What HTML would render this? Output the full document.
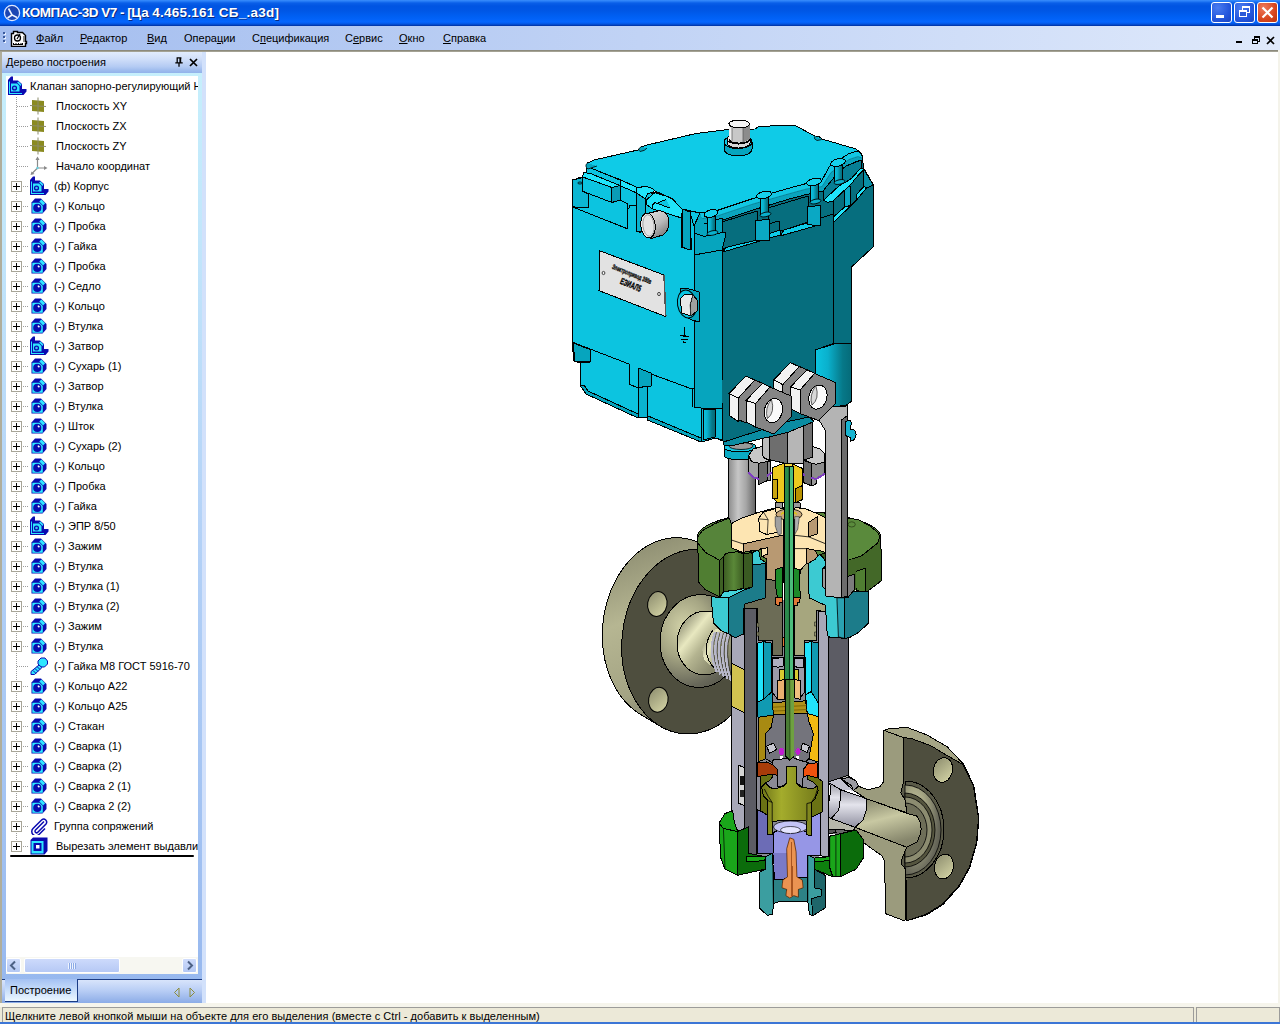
<!DOCTYPE html>
<html><head><meta charset="utf-8"><title>KOMPAS-3D V7</title>
<style>
*{box-sizing:border-box;margin:0;padding:0}
html,body{width:1280px;height:1024px;overflow:hidden;background:#fff;font-family:"Liberation Sans",sans-serif;font-size:11px;color:#000}
#title{position:absolute;left:0;top:0;width:1280px;height:26px;background:linear-gradient(180deg,#3a8efc 0,#2278f4 1.5px,#0a5fe8 3px,#0054e2 6px,#0057e6 11px,#0060f4 17px,#0566fe 22px,#0455e0 24px,#002f9e 26px)}
#title .cap{position:absolute;left:22px;top:5px;color:#fff;font-weight:bold;font-size:13.5px;letter-spacing:-0.05px;white-space:nowrap;text-shadow:1px 1px 0 #0a2a80}
.tb{position:absolute;top:2px;width:21px;height:21px;border:1px solid #fff;border-radius:3px;background:radial-gradient(circle at 30% 25%,#4a7cf0,#2456dc 60%,#1a44c0)}
.tb.x{background:radial-gradient(circle at 30% 25%,#ee7a5c,#d8461e 60%,#b83410)}
#menu{position:absolute;left:0;top:26px;width:1280px;height:24px;background:linear-gradient(90deg,#a3bdef,#dfe9fb)}
#menu span{position:absolute;top:6px;font-size:11px;white-space:nowrap}
#menu u{text-decoration:underline}
#mline{position:absolute;left:0;top:50px;width:1278px;height:2px;background:linear-gradient(180deg,#807e70,#b0aea0)}
#pgray{position:absolute;left:0;top:52px;width:2px;height:951px;background:#b0ae9c}
#pbg{position:absolute;left:2px;top:52px;width:200px;height:951px;background:linear-gradient(180deg,#c6f0fc 0,#c2e6fb 20%,#b4d2f7 50%,#a0c0f1 85%,#96b7ee 100%)}
#pright{position:absolute;left:202px;top:52px;width:4px;height:951px;background:#d2e1fb}
#phead{position:absolute;left:2px;top:52px;width:200px;height:21px;background:linear-gradient(180deg,#e2ecfd 0,#cfdef9 35%,#b4cbf3 70%,#9dbbed 88%,#92b2ea 100%)}
#phead span{position:absolute;left:4px;top:4px;font-size:11px;white-space:nowrap}
#tree{position:absolute;left:6px;top:76px;width:192px;height:881px;background:#fff}
#rows{position:absolute;left:0;top:0;width:198px;height:957px;overflow:hidden}
.tx{position:absolute;white-space:nowrap;font-size:11px;line-height:14px}
.ic{position:absolute}
.pl{position:absolute;left:11px;width:11px;height:11px;border:1px solid #a8a598;background:#fff}
.pl:before{content:"";position:absolute;left:1px;top:4px;width:7px;height:1px;background:#000}
.pl:after{content:"";position:absolute;left:4px;top:1px;width:1px;height:7px;background:#000}
.vd{position:absolute;width:1px;background:repeating-linear-gradient(180deg,#9c9c9c 0,#9c9c9c 1px,transparent 1px,transparent 2px)}
.hd{position:absolute;height:1px;background:repeating-linear-gradient(90deg,#9c9c9c 0,#9c9c9c 1px,transparent 1px,transparent 2px)}
#hs{position:absolute;left:6px;top:957px;width:192px;height:17px;background:#f7f7f1}
.sb{position:absolute;top:1px;width:15px;height:15px;border:1px solid #fff;border-radius:2px;background:linear-gradient(180deg,#cfdcfb,#b4c8f4)}
#thumb{position:absolute;left:18px;top:1px;width:96px;height:15px;border:1px solid #fff;border-radius:2px;background:linear-gradient(180deg,#cddafb,#b6c9f5)}
#tabs{position:absolute;left:2px;top:979px;width:200px;height:24px;border-top:1px solid #1b3c84;background:linear-gradient(180deg,#d8e4fb 0,#b9cef5 45%,#8cace7 100%)}
#tab{position:absolute;left:3px;top:-1px;width:73px;height:23px;border-right:1px solid #1b3c84;border-bottom:1px solid #1b3c84;background:linear-gradient(180deg,#a4c1f3 0,#c4dbfa 45%,#ecf7ff 100%)}
#tab span{position:absolute;left:5px;top:5px;font-size:11px}
#gap{position:absolute;left:0;top:1003px;width:1280px;height:4px;background:#f6f5ec}
#status{position:absolute;left:0;top:1007px;width:1280px;height:17px;background:#ece9d8}
#status .f{position:absolute;top:0;height:16px;border:1px solid #9c9c9a;border-bottom:none}
#status span{position:absolute;left:2px;top:2px;font-size:11px;white-space:nowrap;letter-spacing:0.05px}
#sblue{position:absolute;left:0;top:1022px;width:1280px;height:2px;background:#3c76d6}
#vr{position:absolute;left:1278px;top:50px;width:2px;height:953px;background:#f4f3ea}
</style></head><body>
<svg width="0" height="0" style="position:absolute">
<defs>
<symbol id="i-part" viewBox="0 0 16 16">
 <polygon points="0.5,4.5 4,0.5 10,0.5 15.5,6 15.5,11 11.5,15.5 0.5,15.5" fill="#0a0ab0"/>
 <polygon points="1.3,4.8 8.5,4.8 11.8,8 11.8,14.8 1.3,14.8" fill="#2ee6ff"/>
 <polygon points="8.3,3.6 10.4,1.5 14.2,5.3 12.1,7.4" fill="#2ee6ff"/>
 <circle cx="6.3" cy="9.9" r="4.1" fill="#0a0ab0"/>
 <polygon points="6.3,8 7.5,7.2 9,8.8 7.8,9.8" fill="#fff"/>
</symbol>
<symbol id="i-asm" viewBox="0 0 20 20">
 <polygon points="1,4 4,0.5 6,0.5 6,4.5 11,4.5 15,8 15,13 19.5,13 19.5,15.5 16.5,19 1,19" fill="#0a0ab0"/>
 <polygon points="2,5.5 2,18 15,18 15,17 3,17 3,5.5" fill="#2ee6ff"/>
 <polygon points="4,7.5 10,7.5 12.5,10 12.5,15.5 4,15.5" fill="#2ee6ff"/>
 <polygon points="10,6.5 11.5,5.5 14.5,8.5 13.5,10" fill="#2ee6ff"/>
 <circle cx="7.5" cy="12" r="2.6" fill="#0a0ab0"/>
 <circle cx="7.5" cy="12" r="1.3" fill="#38c8f0"/>
</symbol>
<symbol id="i-plane" viewBox="0 0 18 18">
 <polygon points="3,3 15,4 15,15 3,14" fill="#8a8a20"/>
 <path d="M9 0.5V17.5M1 8.5L17 9.5" stroke="#8c8c6c" stroke-width="1" fill="none"/>
</symbol>
<symbol id="i-origin" viewBox="0 0 20 20">
 <path d="M8.5 12V2M8.5 12L17 12M8.5 12L2.5 18" stroke="#8a8a8a" stroke-width="1.2" fill="none"/>
 <polygon points="8.5,0.5 6.5,4 10.5,4" fill="#8a8a8a"/>
 <polygon points="18.5,12 15,10 15,14" fill="#8a8a8a"/>
 <polygon points="1.5,19 2.5,15.5 5.5,18" fill="#8a8a8a"/>
 <circle cx="8.5" cy="12" r="1.2" fill="#6ad0e0"/>
</symbol>
<symbol id="i-bolt" viewBox="0 0 18 18">
 <polygon points="8,4 11,1 15,1 17.5,4 17.5,7 14.5,10 11,10 8,7" fill="#2ee6ff" stroke="#0a0ab0" stroke-width="1"/>
 <polygon points="9,8 12,10.5 4.5,17.5 1,17.5 1,14.5" fill="#2ee6ff" stroke="#0a0ab0" stroke-width="1"/>
 <path d="M3 13.5l3 3M5 11.5l3 3M7 9.5l3 3" stroke="#0a0ab0" stroke-width="1"/>
</symbol>
<symbol id="i-clip" viewBox="0 0 18 18">
 <path d="M14 4.5L5.5 13a1.6 1.6 0 0 0 2.3 2.3L16 7a3 3 0 0 0-4.2-4.2L3 11.5a4.2 4.2 0 0 0 6 6L15 11.5" stroke="#0a0ab0" stroke-width="1.5" fill="none"/>
</symbol>
<symbol id="i-cut" viewBox="0 0 18 18">
 <polygon points="0.5,3 3,0.5 17.5,0.5 17.5,14 14.5,17.5 0.5,17.5" fill="#0a0ab0"/>
 <polygon points="1.5,4 13.5,4 13.5,16.5 1.5,16.5" fill="#2ee6ff"/>
 <polygon points="14.5,3.5 16.5,1.5 16.5,13.5 14.5,16" fill="#0a0ab0"/>
 <rect x="3.5" y="6" width="8" height="8" fill="#0a0ab0"/>
 <rect x="6" y="8" width="3.5" height="3.5" fill="#fff"/>
</symbol>
</defs></svg>
<div id="title">
 <svg style="position:absolute;left:3px;top:4px" width="18" height="18" viewBox="0 0 18 18"><circle cx="9" cy="9" r="7.6" fill="#1c46b4" stroke="#dfe8ff" stroke-width="1.3"/><path d="M5.5 4.5L9 11L14 13.5M9 11L4.5 14" stroke="#eef3ff" stroke-width="1.6" fill="none"/></svg>
 <span class="cap"><span style="letter-spacing:-0.5px">КОМПАС-3D V7 - [Ца</span><span style="letter-spacing:0.26px"> 4.465.161 СБ_.a3d]</span></span>
 <div class="tb" style="left:1211px"><i style="position:absolute;left:4px;top:12px;width:8px;height:3px;background:#fff"></i></div>
 <div class="tb" style="left:1234px"><i style="position:absolute;left:7px;top:3px;width:8px;height:7px;border:1px solid #fff;border-top-width:2px"></i><i style="position:absolute;left:4px;top:7px;width:8px;height:7px;border:1px solid #fff;border-top-width:2px;background:#2a5ad8"></i></div>
 <div class="tb x" style="left:1257px"><svg width="19" height="19" viewBox="0 0 19 19" style="position:absolute;left:0;top:0"><path d="M4.5 4.5l10 10M14.5 4.5l-10 10" stroke="#fff" stroke-width="2.2"/></svg></div>
</div>
<div id="menu">
 <i style="position:absolute;left:3px;top:6px;width:2px;height:2px;background:#3a5a9c;box-shadow:0 4px 0 #3a5a9c,0 8px 0 #3a5a9c,1px 1px 0 #e8f0ff,1px 5px 0 #e8f0ff,1px 9px 0 #e8f0ff"></i>
 <svg style="position:absolute;left:10px;top:3px" width="18" height="18" viewBox="0 0 18 18"><path d="M1.5 4.5h2v-2h4v1h5l3 3v6h1v2h-1v3h-14z" fill="#fff" stroke="#000" stroke-width="1.4"/><rect x="3" y="14" width="10" height="2" fill="#000"/><path d="M4 14.5h8" stroke="#fff" stroke-dasharray="1.5 1" stroke-width="1"/><circle cx="7.5" cy="9" r="3" fill="none" stroke="#000" stroke-width="1.3"/><path d="M7 10l3-5" stroke="#000" stroke-width="1.2"/><rect x="13" y="7" width="2" height="6" fill="#888"/></svg>
 <span style="left:36px"><u>Ф</u>айл</span>
 <span style="left:80px"><u>Р</u>едактор</span>
 <span style="left:147px"><u>В</u>ид</span>
 <span style="left:184px">Опера<u>ц</u>ии</span>
 <span style="left:252px">С<u>п</u>ецификация</span>
 <span style="left:345px">С<u>е</u>рвис</span>
 <span style="left:399px"><u>О</u>кно</span>
 <span style="left:443px"><u>С</u>правка</span>
 <i style="position:absolute;left:1236px;top:15px;width:6px;height:2px;background:#000"></i>
 <i style="position:absolute;left:1254px;top:10px;width:6px;height:6px;border:1px solid #000;border-top-width:2px"></i>
 <i style="position:absolute;left:1252px;top:13px;width:6px;height:5px;border:1px solid #000;border-top-width:2px;background:#dde8fb"></i>
 <svg style="position:absolute;left:1266px;top:10px" width="9" height="9" viewBox="0 0 9 9"><path d="M1 1l7 7M8 1l-7 7" stroke="#000" stroke-width="1.7"/></svg>
</div>
<div id="mline"></div>
<div id="pgray"></div><div id="pbg"></div><div id="pright"></div>
<div id="phead"><span>Дерево построения</span>
 <svg style="position:absolute;left:173px;top:5px" width="8" height="10" viewBox="0 0 8 10"><path d="M1.6 0.8h4.8M2.2 0.8v5M0.3 5.8h7.4M4 6v3.7" stroke="#000" stroke-width="1.3" fill="none"/><path d="M5.3 1v5" stroke="#000" stroke-width="1.8"/></svg>
 <svg style="position:absolute;left:187px;top:6px" width="9" height="9" viewBox="0 0 9 9"><path d="M1 1l7 7M8 1l-7 7" stroke="#000" stroke-width="1.7"/></svg>
</div>
<div id="tree"></div>
<div id="rows">
<i class="vd" style="left:16px;top:97px;height:750px"></i>
<i class="hd" style="left:17px;top:106px;width:12px"></i>
<i class="hd" style="left:17px;top:126px;width:12px"></i>
<i class="hd" style="left:17px;top:146px;width:12px"></i>
<i class="hd" style="left:17px;top:166px;width:12px"></i>
<i class="hd" style="left:23px;top:186px;width:6px"></i>
<i class="hd" style="left:23px;top:206px;width:6px"></i>
<i class="hd" style="left:23px;top:226px;width:6px"></i>
<i class="hd" style="left:23px;top:246px;width:6px"></i>
<i class="hd" style="left:23px;top:266px;width:6px"></i>
<i class="hd" style="left:23px;top:286px;width:6px"></i>
<i class="hd" style="left:23px;top:306px;width:6px"></i>
<i class="hd" style="left:23px;top:326px;width:6px"></i>
<i class="hd" style="left:23px;top:346px;width:6px"></i>
<i class="hd" style="left:23px;top:366px;width:6px"></i>
<i class="hd" style="left:23px;top:386px;width:6px"></i>
<i class="hd" style="left:23px;top:406px;width:6px"></i>
<i class="hd" style="left:23px;top:426px;width:6px"></i>
<i class="hd" style="left:23px;top:446px;width:6px"></i>
<i class="hd" style="left:23px;top:466px;width:6px"></i>
<i class="hd" style="left:23px;top:486px;width:6px"></i>
<i class="hd" style="left:23px;top:506px;width:6px"></i>
<i class="hd" style="left:23px;top:526px;width:6px"></i>
<i class="hd" style="left:23px;top:546px;width:6px"></i>
<i class="hd" style="left:23px;top:566px;width:6px"></i>
<i class="hd" style="left:23px;top:586px;width:6px"></i>
<i class="hd" style="left:23px;top:606px;width:6px"></i>
<i class="hd" style="left:23px;top:626px;width:6px"></i>
<i class="hd" style="left:23px;top:646px;width:6px"></i>
<i class="hd" style="left:17px;top:666px;width:12px"></i>
<i class="hd" style="left:23px;top:686px;width:6px"></i>
<i class="hd" style="left:23px;top:706px;width:6px"></i>
<i class="hd" style="left:23px;top:726px;width:6px"></i>
<i class="hd" style="left:23px;top:746px;width:6px"></i>
<i class="hd" style="left:23px;top:766px;width:6px"></i>
<i class="hd" style="left:23px;top:786px;width:6px"></i>
<i class="hd" style="left:23px;top:806px;width:6px"></i>
<i class="hd" style="left:23px;top:826px;width:6px"></i>
<i class="hd" style="left:23px;top:846px;width:6px"></i>
<svg class="ic" style="left:7px;top:76px" width="20" height="20"><use href="#i-asm"/></svg><span class="tx" style="left:30px;top:79px">Клапан запорно-регулирующий Н</span>
<svg class="ic" style="left:29px;top:97px" width="18" height="18"><use href="#i-plane"/></svg>
<span class="tx" style="left:56px;top:99px">Плоскость XY</span>
<svg class="ic" style="left:29px;top:117px" width="18" height="18"><use href="#i-plane"/></svg>
<span class="tx" style="left:56px;top:119px">Плоскость ZX</span>
<svg class="ic" style="left:29px;top:137px" width="18" height="18"><use href="#i-plane"/></svg>
<span class="tx" style="left:56px;top:139px">Плоскость ZY</span>
<svg class="ic" style="left:29px;top:156px" width="20" height="20"><use href="#i-origin"/></svg>
<span class="tx" style="left:56px;top:159px">Начало координат</span>
<i class="pl" style="top:181px"></i>
<svg class="ic" style="left:29px;top:176px" width="20" height="20"><use href="#i-asm"/></svg>
<span class="tx" style="left:54px;top:179px">(ф) Корпус</span>
<i class="pl" style="top:201px"></i>
<svg class="ic" style="left:31px;top:198px" width="16" height="16"><use href="#i-part"/></svg>
<span class="tx" style="left:54px;top:199px">(-) Кольцо</span>
<i class="pl" style="top:221px"></i>
<svg class="ic" style="left:31px;top:218px" width="16" height="16"><use href="#i-part"/></svg>
<span class="tx" style="left:54px;top:219px">(-) Пробка</span>
<i class="pl" style="top:241px"></i>
<svg class="ic" style="left:31px;top:238px" width="16" height="16"><use href="#i-part"/></svg>
<span class="tx" style="left:54px;top:239px">(-) Гайка</span>
<i class="pl" style="top:261px"></i>
<svg class="ic" style="left:31px;top:258px" width="16" height="16"><use href="#i-part"/></svg>
<span class="tx" style="left:54px;top:259px">(-) Пробка</span>
<i class="pl" style="top:281px"></i>
<svg class="ic" style="left:31px;top:278px" width="16" height="16"><use href="#i-part"/></svg>
<span class="tx" style="left:54px;top:279px">(-) Седло</span>
<i class="pl" style="top:301px"></i>
<svg class="ic" style="left:31px;top:298px" width="16" height="16"><use href="#i-part"/></svg>
<span class="tx" style="left:54px;top:299px">(-) Кольцо</span>
<i class="pl" style="top:321px"></i>
<svg class="ic" style="left:31px;top:318px" width="16" height="16"><use href="#i-part"/></svg>
<span class="tx" style="left:54px;top:319px">(-) Втулка</span>
<i class="pl" style="top:341px"></i>
<svg class="ic" style="left:29px;top:336px" width="20" height="20"><use href="#i-asm"/></svg>
<span class="tx" style="left:54px;top:339px">(-) Затвор</span>
<i class="pl" style="top:361px"></i>
<svg class="ic" style="left:31px;top:358px" width="16" height="16"><use href="#i-part"/></svg>
<span class="tx" style="left:54px;top:359px">(-) Сухарь (1)</span>
<i class="pl" style="top:381px"></i>
<svg class="ic" style="left:31px;top:378px" width="16" height="16"><use href="#i-part"/></svg>
<span class="tx" style="left:54px;top:379px">(-) Затвор</span>
<i class="pl" style="top:401px"></i>
<svg class="ic" style="left:31px;top:398px" width="16" height="16"><use href="#i-part"/></svg>
<span class="tx" style="left:54px;top:399px">(-) Втулка</span>
<i class="pl" style="top:421px"></i>
<svg class="ic" style="left:31px;top:418px" width="16" height="16"><use href="#i-part"/></svg>
<span class="tx" style="left:54px;top:419px">(-) Шток</span>
<i class="pl" style="top:441px"></i>
<svg class="ic" style="left:31px;top:438px" width="16" height="16"><use href="#i-part"/></svg>
<span class="tx" style="left:54px;top:439px">(-) Сухарь (2)</span>
<i class="pl" style="top:461px"></i>
<svg class="ic" style="left:31px;top:458px" width="16" height="16"><use href="#i-part"/></svg>
<span class="tx" style="left:54px;top:459px">(-) Кольцо</span>
<i class="pl" style="top:481px"></i>
<svg class="ic" style="left:31px;top:478px" width="16" height="16"><use href="#i-part"/></svg>
<span class="tx" style="left:54px;top:479px">(-) Пробка</span>
<i class="pl" style="top:501px"></i>
<svg class="ic" style="left:31px;top:498px" width="16" height="16"><use href="#i-part"/></svg>
<span class="tx" style="left:54px;top:499px">(-) Гайка</span>
<i class="pl" style="top:521px"></i>
<svg class="ic" style="left:29px;top:516px" width="20" height="20"><use href="#i-asm"/></svg>
<span class="tx" style="left:54px;top:519px">(-) ЭПР 8/50</span>
<i class="pl" style="top:541px"></i>
<svg class="ic" style="left:31px;top:538px" width="16" height="16"><use href="#i-part"/></svg>
<span class="tx" style="left:54px;top:539px">(-) Зажим</span>
<i class="pl" style="top:561px"></i>
<svg class="ic" style="left:31px;top:558px" width="16" height="16"><use href="#i-part"/></svg>
<span class="tx" style="left:54px;top:559px">(-) Втулка</span>
<i class="pl" style="top:581px"></i>
<svg class="ic" style="left:31px;top:578px" width="16" height="16"><use href="#i-part"/></svg>
<span class="tx" style="left:54px;top:579px">(-) Втулка (1)</span>
<i class="pl" style="top:601px"></i>
<svg class="ic" style="left:31px;top:598px" width="16" height="16"><use href="#i-part"/></svg>
<span class="tx" style="left:54px;top:599px">(-) Втулка (2)</span>
<i class="pl" style="top:621px"></i>
<svg class="ic" style="left:31px;top:618px" width="16" height="16"><use href="#i-part"/></svg>
<span class="tx" style="left:54px;top:619px">(-) Зажим</span>
<i class="pl" style="top:641px"></i>
<svg class="ic" style="left:31px;top:638px" width="16" height="16"><use href="#i-part"/></svg>
<span class="tx" style="left:54px;top:639px">(-) Втулка</span>
<svg class="ic" style="left:30px;top:657px" width="18" height="18"><use href="#i-bolt"/></svg>
<span class="tx" style="left:54px;top:659px">(-) Гайка М8 ГОСТ 5916-70</span>
<i class="pl" style="top:681px"></i>
<svg class="ic" style="left:31px;top:678px" width="16" height="16"><use href="#i-part"/></svg>
<span class="tx" style="left:54px;top:679px">(-) Кольцо А22</span>
<i class="pl" style="top:701px"></i>
<svg class="ic" style="left:31px;top:698px" width="16" height="16"><use href="#i-part"/></svg>
<span class="tx" style="left:54px;top:699px">(-) Кольцо А25</span>
<i class="pl" style="top:721px"></i>
<svg class="ic" style="left:31px;top:718px" width="16" height="16"><use href="#i-part"/></svg>
<span class="tx" style="left:54px;top:719px">(-) Стакан</span>
<i class="pl" style="top:741px"></i>
<svg class="ic" style="left:31px;top:738px" width="16" height="16"><use href="#i-part"/></svg>
<span class="tx" style="left:54px;top:739px">(-) Сварка (1)</span>
<i class="pl" style="top:761px"></i>
<svg class="ic" style="left:31px;top:758px" width="16" height="16"><use href="#i-part"/></svg>
<span class="tx" style="left:54px;top:759px">(-) Сварка (2)</span>
<i class="pl" style="top:781px"></i>
<svg class="ic" style="left:31px;top:778px" width="16" height="16"><use href="#i-part"/></svg>
<span class="tx" style="left:54px;top:779px">(-) Сварка 2 (1)</span>
<i class="pl" style="top:801px"></i>
<svg class="ic" style="left:31px;top:798px" width="16" height="16"><use href="#i-part"/></svg>
<span class="tx" style="left:54px;top:799px">(-) Сварка 2 (2)</span>
<i class="pl" style="top:821px"></i>
<svg class="ic" style="left:30px;top:817px" width="18" height="18"><use href="#i-clip"/></svg>
<span class="tx" style="left:54px;top:819px">Группа сопряжений</span>
<i class="pl" style="top:841px"></i>
<svg class="ic" style="left:30px;top:837px" width="18" height="18"><use href="#i-cut"/></svg>
<span class="tx" style="left:56px;top:839px">Вырезать элемент выдавли</span>
<i style="position:absolute;left:10px;top:855px;width:184px;height:2px;background:#000;border-radius:1px"></i>
</div>
<div id="hs"><div class="sb" style="left:0"><svg width="13" height="13" viewBox="0 0 13 13"><path d="M8 2.5L4 6.5L8 10.5" stroke="#4d6185" stroke-width="2" fill="none"/></svg></div><div id="thumb"><i style="position:absolute;left:43px;top:4px;width:1px;height:6px;background:#eef4fe;box-shadow:1px 0 0 #8caae6,2px 0 0 #eef4fe,3px 0 0 #8caae6,4px 0 0 #eef4fe,5px 0 0 #8caae6,6px 0 0 #eef4fe,7px 0 0 #8caae6"></i></div><div class="sb" style="left:176px"><svg width="13" height="13" viewBox="0 0 13 13"><path d="M5 2.5L9 6.5L5 10.5" stroke="#4d6185" stroke-width="2" fill="none"/></svg></div></div>
<div id="tabs"><div id="tab"><span>Построение</span></div>
 <svg style="position:absolute;left:171px;top:7px" width="24" height="11" viewBox="0 0 24 11"><path d="M6 1L1.5 5.5L6 10z M17 1l4.5 4.5L17 10z" stroke="#8c8c3c" stroke-width="1" fill="none"/></svg>
</div>
<div id="gap"></div>
<div id="status"><div class="f" style="left:2px;width:1192px"><span>Щелкните левой кнопкой мыши на объекте для его выделения (вместе с Ctrl - добавить к выделенным)</span></div><div class="f" style="left:1196px;width:84px"></div></div>
<div id="sblue"></div>
<div id="vr"></div>
<svg id="model" style="position:absolute;left:206px;top:52px" width="1070" height="951" viewBox="206 52 1070 951" shape-rendering="crispEdges" stroke-linejoin="round"><defs>
<linearGradient id="gcol" x1="0" x2="1" y1="0" y2="0"><stop offset="0" stop-color="#8e8e8e"/><stop offset=".35" stop-color="#c6c6c6"/><stop offset=".65" stop-color="#a6a6a6"/><stop offset="1" stop-color="#666666"/></linearGradient>
<linearGradient id="gcyl" x1="0" x2="1" y1="0" y2="0"><stop offset="0" stop-color="#0cc6e2"/><stop offset=".35" stop-color="#0ab0cc"/><stop offset=".75" stop-color="#067888"/><stop offset="1" stop-color="#056a78"/></linearGradient>
<linearGradient id="grim" x1="0.3" x2="0.6" y1="0" y2="1"><stop offset="0" stop-color="#8e8e72"/><stop offset=".35" stop-color="#b6b692"/><stop offset=".7" stop-color="#a4a484"/><stop offset="1" stop-color="#66665a"/></linearGradient>
<radialGradient id="ghub" cx=".45" cy=".4" r=".7"><stop offset="0" stop-color="#e6e6b8"/><stop offset=".45" stop-color="#b4b48e"/><stop offset="1" stop-color="#6a6a54"/></radialGradient>
<linearGradient id="ghole" x1="0" x2="1" y1="0" y2="1"><stop offset="0" stop-color="#8a8a6c"/><stop offset="1" stop-color="#d8d8a8"/></linearGradient>
<linearGradient id="gpipe" x1="0" x2="0" y1="0" y2="1"><stop offset="0" stop-color="#8a8a70"/><stop offset=".45" stop-color="#d0d0a8"/><stop offset="1" stop-color="#8c8c70"/></linearGradient>
<linearGradient id="gstub" x1="0" x2="0" y1="0" y2="1"><stop offset="0" stop-color="#9a9aa4"/><stop offset=".4" stop-color="#e4e4ec"/><stop offset="1" stop-color="#9090a0"/></linearGradient>
<linearGradient id="golive" x1="0" x2="1" y1="0" y2="0"><stop offset="0" stop-color="#6e7418"/><stop offset=".35" stop-color="#a4ac2c"/><stop offset="1" stop-color="#747a1a"/></linearGradient>
<linearGradient id="ggrn" x1="0" x2="1" y1="0" y2="0"><stop offset="0" stop-color="#3c5c22"/><stop offset=".5" stop-color="#5a8838"/><stop offset="1" stop-color="#3a5a20"/></linearGradient>
<linearGradient id="gpipe2" x1="0" x2=".35" y1="0" y2="1"><stop offset="0" stop-color="#7c7c64"/><stop offset=".5" stop-color="#c8c8a2"/><stop offset="1" stop-color="#86866c"/></linearGradient>
<radialGradient id="ghub1" cx=".28" cy=".36" r=".8"><stop offset="0" stop-color="#d2d2a8"/><stop offset=".4" stop-color="#a6a684"/><stop offset=".8" stop-color="#68685a"/><stop offset="1" stop-color="#56564a"/></radialGradient>
<linearGradient id="ghub2" x1="0" x2="1" y1="0.1" y2="0.9"><stop offset="0" stop-color="#7a7a62"/><stop offset=".3" stop-color="#e8e8c0"/><stop offset=".5" stop-color="#b4b490"/><stop offset="1" stop-color="#6a6a54"/></linearGradient>
</defs>
<polygon points="602.3,635.7 602.5,629.2 603.0,622.8 603.8,616.4 605.0,610.1 606.5,603.8 608.3,597.7 610.4,591.8 612.9,586.0 615.6,580.5 618.6,575.1 621.9,570.1 625.4,565.3 629.1,560.9 633.1,556.8 637.2,553.1 641.5,549.7 646.0,546.7 650.6,544.1 655.3,542.0 660.1,540.3 665.0,539.0 669.9,538.1 674.8,537.7 679.7,537.8 684.5,538.3 689.3,539.2 694.1,540.6 698.7,542.5 703.2,544.7 722.6,556.4 726.9,559.1 731.1,562.2 735.0,565.6 738.8,569.4 742.4,573.6 745.7,578.1 748.7,583.0 751.5,588.1 753.9,593.4 756.1,599.0 757.9,604.9 759.5,610.8 760.7,617.0 761.6,623.3 762.1,629.6 762.3,636.0 762.1,642.5 761.6,648.9 760.8,655.3 759.6,661.6 758.1,667.9 756.3,674.0 754.2,679.9 751.7,685.7 749.0,691.2 746.0,696.6 742.7,701.6 739.2,706.4 735.5,710.8 731.5,714.9 727.4,718.6 723.1,722.0 718.6,725.0 714.0,727.6 709.3,729.7 704.5,731.4 699.6,732.7 694.7,733.6 689.8,734.0 684.9,733.9 680.1,733.4 675.3,732.5 670.5,731.1 665.9,729.2 661.4,727.0 642.0,715.3 637.7,712.6 633.5,709.5 629.6,706.1 625.8,702.3 622.2,698.1 618.9,693.6 615.9,688.7 613.1,683.6 610.7,678.3 608.5,672.7 606.7,666.8 605.1,660.9 603.9,654.7 603.0,648.4 602.5,642.1" fill="url(#grim)" stroke="#000" stroke-width="1" />
<ellipse cx="692" cy="641.7" rx="70" ry="92.5" fill="#4e4e3e" stroke="#000" stroke-width="1" transform="rotate(5.9 692 641.7)" />
<ellipse cx="700" cy="641" rx="40" ry="46.5" fill="url(#ghub1)" stroke="#000" stroke-width="1" transform="rotate(4 700 641)" />
<ellipse cx="705" cy="643" rx="28" ry="32" fill="url(#ghub2)" stroke="#000" stroke-width="1" transform="rotate(4 705 643)" />
<polygon points="713.0,630.0 731.0,626.0 731.0,680.0 716.0,670.0 704.0,660.0 702.0,648.0" fill="url(#ghub2)" />
<path d="M713 630 Q698 652 716 670" fill="none" stroke="#000" stroke-width="1" />
<path d="M715 632.0 Q708 652 717 672.0" fill="none" stroke="#b8b8c8" stroke-width="2.4" />
<path d="M716.6 632.0 Q709.6 652 718.6 672.0" fill="none" stroke="#222" stroke-width="0.7" />
<path d="M718.5 632.3 Q711.5 652 720.5 674.2" fill="none" stroke="#b8b8c8" stroke-width="2.4" />
<path d="M720.1 632.3 Q713.1 652 722.1 674.2" fill="none" stroke="#222" stroke-width="0.7" />
<path d="M722 632.6 Q715 652 724 676.4" fill="none" stroke="#b8b8c8" stroke-width="2.4" />
<path d="M723.6 632.6 Q716.6 652 725.6 676.4" fill="none" stroke="#222" stroke-width="0.7" />
<path d="M725.5 632.9 Q718.5 652 727.5 678.6" fill="none" stroke="#b8b8c8" stroke-width="2.4" />
<path d="M727.1 632.9 Q720.1 652 729.1 678.6" fill="none" stroke="#222" stroke-width="0.7" />
<path d="M729 633.2 Q722 652 731 680.8" fill="none" stroke="#b8b8c8" stroke-width="2.4" />
<path d="M730.6 633.2 Q723.6 652 732.6 680.8" fill="none" stroke="#222" stroke-width="0.7" />
<ellipse cx="657.3" cy="604" rx="9.7" ry="12.5" fill="url(#ghole)" stroke="#000" stroke-width="1" transform="rotate(10 657.3 604)" />
<ellipse cx="658.3" cy="699.8" rx="9.7" ry="12.5" fill="url(#ghole)" stroke="#000" stroke-width="1" transform="rotate(10 658.3 699.8)" />
<polygon points="883.6,730.3 890.7,728.2 908.2,727.8 926.6,734.8 947.1,746.7 963.5,764.1 973.8,785.6 978.9,818.4 976.8,843.0 969.7,867.6 959.4,886.1 943.0,904.5 926.6,914.8 906.1,920.9 903.0,863.5 903.0,737.4" fill="#a6a686" stroke="#000" stroke-width="1" />
<polygon points="903.0,737.4 912.3,738.9 930.7,745.6 946.7,755.3 962.9,764.5 973.3,785.8 978.5,818.4 976.4,843.0 969.2,867.4 959.0,885.6 942.6,903.9 926.4,914.1 906.1,920.9 906.1,869.7 901.0,863.5 902.0,859.4 906.1,847.1 906.1,793.8 902.0,790.7 901.0,787.7 903.0,781.5" fill="#4e4e3e" stroke="#000" stroke-width="1" />
<polygon points="900.0,780.0 908.0,780.0 908.0,880.0 900.0,880.0" fill="#5a5a48" />
<path d="M905 781 A39 48.5 0 0 1 905 878 Z" fill="#5a5a48" stroke="#000" stroke-width="1" />
<path d="M905 785 A36 45 0 0 1 905 875 Z" fill="url(#ghub1)" stroke="#000" stroke-width="0.8" />
<path d="M905 793 A30 37 0 0 1 905 867 Z" fill="#55553f" stroke="#000" stroke-width="0.8" />
<path d="M905 797 A27 33 0 0 1 905 863 Z" fill="#8c8c70" stroke="#000" stroke-width="0.8" />
<path d="M905 803 A22 27 0 0 1 905 857 Z" fill="#6e6e58" stroke="#000" stroke-width="0.8" />
<ellipse cx="943" cy="770" rx="9.5" ry="12.5" fill="url(#ghole)" stroke="#000" stroke-width="1" transform="rotate(12 943 770)" />
<ellipse cx="944" cy="866.6" rx="9.5" ry="12.5" fill="url(#ghole)" stroke="#000" stroke-width="1" transform="rotate(12 944 866.6)" />
<polygon points="866.2,798.6 906.6,813.2 917.2,816.2 920.0,822.0 921.3,829.1 920.0,834.9 917.2,842.0 906.6,847.2 855.1,827.3 863.3,819.7 866.2,810.3" fill="url(#gpipe2)" stroke="#000" stroke-width="1" />
<polygon points="883.5,730.2 903.0,737.4 903.7,781.0 900.8,792.7 905.5,801.0 906.6,812.7 866.2,798.6 853.3,790.4 858.6,786.3 868.0,789.8 879.7,786.9 883.2,782.2" fill="#9b9b7d" stroke="#000" stroke-width="1" />
<polygon points="855.0,827.3 906.6,847.2 902.0,859.0 901.0,863.5 906.0,869.7 905.0,921.0 885.6,913.7 884.6,861.5 881.5,855.3 875.4,851.2 864.0,843.0 853.0,835.0" fill="#9b9b7d" stroke="#000" stroke-width="1" />
<polygon points="828.1,777.5 841.6,778.4 853.9,790.6 841.0,790.2 829.3,783.6" fill="#c2c2ce" />
<polygon points="827.0,829.1 849.2,829.7 851.6,833.8 827.5,834.3" fill="#6a6a6a" />
<polygon points="829.9,783.4 841.0,789.8 840.4,798.6 838.7,810.3 831.1,818.5 822.3,815.0 822.3,810.3 829.3,800.9 830.5,791.6" fill="url(#gstub)" stroke="#000" stroke-width="1" />
<polygon points="841.0,789.8 866.2,798.6 866.2,810.3 863.3,819.7 855.1,827.3 831.1,818.5 838.7,810.3 840.4,798.6" fill="url(#gstub)" stroke="#000" stroke-width="1" />
<polygon points="829.3,772.8 838.7,771.6 846.9,775.2 856.3,781.0 858.6,786.3 853.3,790.4 841.0,778.7 829.3,778.7" fill="#b8b8b4" stroke="#000" stroke-width="1" />
<polygon points="823.4,771.1 828.1,772.2 828.7,778.7 824.0,778.1" fill="#c4c4b8" stroke="#000" stroke-width="1" />
<polygon points="841.0,778.7 849.2,777.5 856.3,781.0 858.6,786.3 853.3,790.4 851.6,785.7" fill="#9a9aa0" stroke="#000" stroke-width="1" />
<polygon points="822.3,815.0 831.1,818.5 855.1,827.3 852.7,830.8 835.2,829.1 827.0,830.2 824.0,824.4" fill="#b8b8aa" stroke="#000" stroke-width="1" />
<polygon points="827.0,830.2 835.2,829.1 836.3,832.6 827.5,833.8" fill="#555" stroke="#000" stroke-width="1" />
<polygon points="731.4,628.0 744.7,634.0 744.7,836.0 733.0,826.0 731.4,815.0" fill="#a8a8b8" stroke="#000" stroke-width="1" />
<polygon points="731.4,663.0 744.7,670.0 744.7,713.0 731.4,706.0" fill="#d2c250" stroke="#000" stroke-width="1" />
<polygon points="738.4,765.0 744.7,768.0 744.7,806.0 738.4,803.0" fill="#d4d4d4" stroke="#000" stroke-width="1" />
<rect x="739.5" y="776" width="4" height="9" fill="#111" />
<rect x="740" y="790" width="3.5" height="7" fill="#222" />
<polygon points="756.4,600.0 819.0,600.0 819.0,860.0 756.4,860.0" fill="#8a8a94" />
<polygon points="744.7,608.0 756.4,606.0 756.4,855.0 747.0,853.0 744.7,836.0" fill="#5c5c64" stroke="#000" stroke-width="1" />
<polygon points="818.0,611.0 828.0,611.0 828.0,858.0 819.0,855.0" fill="#a8a8b8" stroke="#000" stroke-width="1" />
<polygon points="828.0,638.0 848.6,628.0 848.6,775.0 828.0,782.0" fill="#5c5c64" stroke="#000" stroke-width="1" />
<polygon points="757.2,643.1 763.4,641.6 763.4,699.4 757.2,702.5" fill="#22e2fa" stroke="#000" stroke-width="1" />
<polygon points="763.4,641.6 771.2,643.1 772.0,691.6 763.4,699.4" fill="#109ab2" stroke="#000" stroke-width="1" />
<polygon points="757.2,702.5 763.4,699.4 772.0,691.6 773.6,715.0 758.0,717.3" fill="#109ab2" stroke="#000" stroke-width="1" />
<polygon points="804.8,643.1 811.1,641.6 811.1,691.6 805.6,694.7" fill="#22e2fa" stroke="#000" stroke-width="1" />
<polygon points="811.1,641.6 818.1,643.1 818.1,702.5 811.1,691.6" fill="#109ab2" stroke="#000" stroke-width="1" />
<polygon points="805.6,694.7 811.1,691.6 818.1,702.5 818.1,716.6 807.2,713.4" fill="#22e2fa" stroke="#000" stroke-width="1" />
<polygon points="772.0,657.2 784.5,657.2 784.5,691.6 777.5,699.4 772.0,691.6" fill="#9c9caa" stroke="#000" stroke-width="1" />
<polygon points="794.7,657.2 804.1,657.2 804.8,691.6 799.4,699.4 794.7,691.6" fill="#9c9caa" stroke="#000" stroke-width="1" />
<polygon points="777.5,680.6 784.5,679.1 784.5,699.4 777.5,699.4" fill="#e8b070" stroke="#000" stroke-width="1" />
<polygon points="794.7,679.1 800.2,680.6 800.2,699.4 794.7,697.8" fill="#f0c080" stroke="#000" stroke-width="1" />
<polygon points="779.8,669.7 784.5,669.7 784.5,679.1 779.8,680.6" fill="#d8c830" stroke="#000" stroke-width="1" />
<polygon points="794.7,669.7 798.6,669.7 798.6,680.6 794.7,679.1" fill="#d8c830" stroke="#000" stroke-width="1" />
<polygon points="777.8,644.6 781.2,642.7 781.2,637.8 784.2,637.8 784.2,646.6 779.3,647.1" fill="#e07838" stroke="#000" stroke-width="1" />
<polygon points="794.9,638.8 796.9,638.8 797.4,643.7 799.8,644.6 799.3,647.1 794.9,646.6" fill="#e07838" stroke="#000" stroke-width="1" />
<polygon points="772.9,658.3 783.2,657.8 783.2,666.1 778.3,667.1 772.9,666.6" fill="#b0b0c0" stroke="#000" stroke-width="1" />
<polygon points="794.9,658.3 803.7,658.8 803.7,667.1 798.8,667.6 794.9,666.6" fill="#b0b0c0" stroke="#000" stroke-width="1" />
<polygon points="772.0,702.5 805.6,700.9 807.2,713.4 773.6,715.0" fill="#b09018" stroke="#000" stroke-width="1" />
<polyline points="772.8,707.2 806.4,705.6" fill="none" stroke="#6a5400" stroke-width="0.7" />
<polyline points="773.1,711.1 806.9,709.5" fill="none" stroke="#6a5400" stroke-width="0.7" />
<polygon points="758.0,717.3 773.6,715.0 771.2,727.5 765.0,733.8 765.8,758.8 758.0,761.9" fill="#a88a12" stroke="#000" stroke-width="1" />
<polygon points="807.2,713.4 818.1,716.6 818.1,761.9 808.8,758.8 813.4,733.8 808.8,721.2" fill="#f2ba12" stroke="#000" stroke-width="1" />
<polygon points="771.2,727.5 773.6,715.0 807.2,713.4 808.8,721.2 813.4,733.8 808.8,758.8 802.5,765.0 775.9,765.0 765.8,758.8 765.0,733.8" fill="#74747c" stroke="#000" stroke-width="1" />
<polygon points="766.6,746.2 773.6,743.1 776.7,749.4 769.7,753.3" fill="#c8c8d0" stroke="#000" stroke-width="1" />
<polygon points="802.5,743.1 809.5,746.2 807.2,752.5 800.9,749.4" fill="#c8c8d0" stroke="#000" stroke-width="1" />
<ellipse cx="781.5" cy="751.5" rx="2.6" ry="3.2" fill="#c020d0" />
<ellipse cx="798" cy="751.5" rx="2.6" ry="3.2" fill="#c020d0" />
<rect x="780" y="756" width="3" height="4" fill="#fff" />
<rect x="795.5" y="756" width="3" height="4" fill="#fff" />
<polygon points="757.8,809.7 768.8,815.9 768.8,834.7 781.2,828.8 800.0,828.8 811.7,834.7 811.7,815.9 820.3,811.2 820.3,855.0 807.8,855.0 807.8,876.9 796.9,880.0 775.0,880.0 773.4,853.4 757.8,853.4" fill="#9696e6" stroke="#000" stroke-width="1" />
<polygon points="757.8,809.7 768.8,815.9 768.8,834.7 773.4,832.3 773.4,853.4 757.8,853.4" fill="#6c6cb6" stroke="#000" stroke-width="1" />
<polygon points="773.4,853.4 787.5,853.4 787.5,880.0 775.0,880.0" fill="#7a7ac8" />
<ellipse cx="790.5" cy="827" rx="17" ry="6" fill="#c4c4f6" stroke="#000" stroke-width="0.7" />
<ellipse cx="790.5" cy="830" rx="10" ry="3.5" fill="#e4e4ff" stroke="#000" stroke-width="0.6" />
<polygon points="759.4,872.2 765.6,869.1 765.6,856.6 772.7,853.4 773.4,880.0 775.0,880.0 796.9,880.0 807.8,876.9 807.8,855.0 814.1,858.1 814.1,869.1 825.0,875.3 825.0,908.1 812.5,915.9 809.4,914.4 807.8,901.1 781.2,901.1 773.4,903.4 772.7,914.4 767.2,915.2 759.4,908.1" fill="#3b9ea0" stroke="#000" stroke-width="1" />
<polygon points="773.4,880.0 807.8,876.9 807.8,901.1 781.2,901.1 773.4,903.4" fill="#2d8286" stroke="#000" stroke-width="1" />
<polygon points="814.1,869.1 825.0,875.3 825.0,908.1 812.5,915.9 811.7,898.8 821.9,895.6 821.9,889.4 814.1,887.8" fill="#1e666a" stroke="#000" stroke-width="1" />
<polyline points="772.7,853.4 773.4,903.4" fill="none" stroke="#000" stroke-width="0.8" />
<polyline points="807.8,855.0 807.8,901.1" fill="none" stroke="#000" stroke-width="0.8" />
<polygon points="789.8,837.8 793.8,839.4 796.1,851.9 796.9,876.9 802.3,880.0 803.1,887.8 798.4,889.4 798.4,897.2 793.8,895.6 789.8,898.0 785.9,895.6 786.7,889.4 782.0,887.8 782.8,880.0 787.5,876.9 786.7,848.8" fill="#ea9352" stroke="#5a2a08" stroke-width="0.8" />
<polyline points="791.4,842.5 792.2,895.6" fill="none" stroke="#a85420" stroke-width="1.5" />
<polygon points="757.6,762.5 766.4,762.0 772.2,764.4 777.1,769.3 777.1,775.2 772.2,774.2 760.0,776.6 757.6,776.1" fill="#a83c0a" stroke="#000" stroke-width="1" />
<polygon points="803.5,769.3 808.4,763.4 817.1,762.9 818.1,778.1 807.4,775.2 803.5,777.1" fill="#f0520e" stroke="#000" stroke-width="1" />
<polygon points="772.2,764.4 773.2,759.5 780.0,759.5 788.8,757.6 792.7,757.6 800.5,760.5 808.4,762.5 803.5,769.3 802.5,786.9 796.6,783.0 796.6,766.4 786.9,766.4 786.9,783.0 783.0,785.9 777.1,786.9 777.1,769.3" fill="#8a8a94" stroke="#000" stroke-width="1" />
<polygon points="785.3,679.1 793.9,679.1 793.9,755.6 790.0,760.3 785.3,755.6" fill="#4a7c34" stroke="#000" stroke-width="1" />
<polygon points="789.7,679.1 793.9,679.1 793.9,755.6 790.0,759.5" fill="#6ea040" />
<polyline points="789.7,679.1 790.0,759.5" fill="none" stroke="#1e3c10" stroke-width="0.7" />
<polygon points="760.0,776.1 772.2,774.2 772.2,777.1 769.3,781.0 765.4,783.0 761.5,786.9 763.4,795.7 767.8,800.5 767.8,815.2 760.0,810.3" fill="#6a7214" stroke="#000" stroke-width="1" />
<polygon points="807.4,775.2 818.1,778.1 822.0,781.0 822.0,812.3 811.3,817.1 811.3,802.5 815.2,798.6 818.1,790.8 817.1,785.9 812.8,782.0 807.4,779.1" fill="#6a7214" stroke="#000" stroke-width="1" />
<polygon points="786.9,766.4 796.6,766.4 796.6,783.0 800.5,786.9 806.4,787.9 812.8,788.8 817.1,785.9 818.1,790.8 815.2,798.6 811.3,802.5 811.3,835.7 806.9,834.7 806.9,821.1 798.6,820.1 781.0,820.1 772.2,822.0 772.2,834.7 767.8,834.7 767.8,800.5 763.4,795.7 761.5,786.9 765.4,783.0 769.3,786.9 773.2,788.8 779.1,787.9 783.9,785.9 786.9,783.0" fill="url(#golive)" stroke="#000" stroke-width="1" />
<polyline points="767.8,800.5 772.2,802.5 772.2,822.0" fill="none" stroke="#000" stroke-width="0.8" />
<polyline points="811.3,802.5 806.9,803.5 806.9,821.1" fill="none" stroke="#000" stroke-width="0.8" />
<path d="M764.4 789 Q768 797 772.2 802.5" fill="none" stroke="#000" stroke-width="0.8" />
<path d="M817.2 790 Q816 797 811.3 802.5" fill="none" stroke="#000" stroke-width="0.8" />
<polygon points="719.5,822.2 725.0,813.6 732.8,810.5 733.6,819.1 737.5,831.6 737.5,875.3 725.0,869.1 720.3,856.6" fill="#1aa61a" stroke="#000" stroke-width="1" />
<polyline points="719.5,823.8 723.4,828.4 737.5,831.6" fill="none" stroke="#000" stroke-width="1" />
<polyline points="723.4,828.4 725.0,869.1" fill="none" stroke="#000" stroke-width="0.7" />
<polygon points="737.5,831.6 748.4,826.9 748.4,853.4 765.6,856.6 765.6,869.1 737.5,875.3" fill="#0b6c0b" stroke="#000" stroke-width="1" />
<polygon points="746.9,856.6 765.6,856.6 764.8,860.5 746.9,862.0" fill="#1aa61a" stroke="#000" stroke-width="1" />
<polygon points="814.1,858.1 829.7,856.6 829.7,836.2 835.9,834.7 856.2,830.0 863.3,839.4 863.3,858.1 856.2,869.1 840.6,876.9 832.8,876.9 814.1,869.1" fill="#1aa61a" stroke="#000" stroke-width="1" />
<polygon points="840.6,833.9 856.2,830.0 863.3,839.4 863.3,858.1 856.2,869.1 840.6,876.9" fill="#0b6c0b" stroke="#000" stroke-width="1" />
<polygon points="814.1,862.0 829.7,860.5 829.7,867.5 832.8,876.9 814.1,869.1" fill="#0e800e" stroke="#000" stroke-width="1" />
<polyline points="829.7,836.2 829.7,867.5" fill="none" stroke="#000" stroke-width="0.8" />
<polyline points="835.9,834.7 835.9,876.1" fill="none" stroke="#000" stroke-width="0.7" />
<ellipse cx="789" cy="538" rx="92" ry="27" fill="#56843a" stroke="#000" stroke-width="1" />
<polygon points="847.8,560.3 861.9,555.6 877.5,543.1 879.8,536.9 881.4,552.5 881.4,580.6 877.5,583.8 865.0,593.1 865.0,568.1 854.8,572.0 847.8,574.4" fill="#436828" stroke="#000" stroke-width="1" />
<polygon points="854.8,572.0 865.0,568.1 865.0,593.1 856.4,590.0 854.8,583.8" fill="#507e32" stroke="#000" stroke-width="1" />
<polygon points="847.8,518.1 858.8,519.7 869.7,525.9 877.5,532.2 879.8,536.9 877.5,543.1 861.9,555.6 847.8,560.3" fill="#5a8a3c" stroke="#000" stroke-width="1" />
<ellipse cx="851.7" cy="524.4" rx="3.6" ry="2.6" fill="#5a8a3c" stroke="#2c4418" stroke-width="0.8" />
<rect x="728.75" y="452" width="26.5" height="73" fill="url(#gcol)" stroke="#000" stroke-width="1" />
<path d="M724 447 L724 455 A16 5 0 0 0 756 455 L756 447Z" fill="#0aaac4" stroke="#000" stroke-width="1" />
<ellipse cx="740" cy="447" rx="16" ry="5" fill="#18c8e2" stroke="#000" stroke-width="1" />
<ellipse cx="741" cy="446" rx="12" ry="3.5" fill="#9a9a9a" stroke="#000" stroke-width="0.8" />
<polygon points="818.1,555.6 825.9,552.5 825.9,565.0 822.8,568.1 822.8,557.2 819.7,554.1" fill="#3e6024" stroke="#000" stroke-width="1" />
<polygon points="808.0,563.4 815.0,559.5 818.1,555.6 819.7,554.1 822.8,557.2 827.5,565.0 822.8,568.1 822.8,586.9 827.5,590.8 836.9,594.7 844.7,597.8 844.7,638.4 838.4,637.7 828.3,636.9 826.2,627.5 825.9,605.6 808.8,597.8" fill="#3ccad2" stroke="#000" stroke-width="1" />
<polygon points="836.9,597.8 844.7,597.8 844.7,638.4 838.4,636.9" fill="#2aa2b2" stroke="#000" stroke-width="0.8" />
<polygon points="844.7,597.8 852.5,591.6 868.1,591.6 868.9,622.8 858.8,632.2 849.4,637.7 844.7,638.4" fill="#1c7c8a" stroke="#000" stroke-width="1" />
<polygon points="846.2,560.3 855.6,558.8 855.6,590.0 846.2,597.8" fill="#436828" />
<polygon points="822.8,568.1 827.5,569.7 827.5,590.8 822.8,586.9" fill="#9c9c9c" stroke="#000" stroke-width="1" />
<polygon points="842.3,574.4 846.2,576.7 854.1,574.4 854.1,590.0 847.8,597.8 842.3,596.2" fill="#7c7c7c" stroke="#000" stroke-width="1" />
<polygon points="842.3,574.4 846.2,576.7 847.8,597.8 842.3,596.2" fill="#a8a8a8" stroke="#000" stroke-width="1" />
<polygon points="744.7,604.1 765.8,597.8 765.8,579.1 775.2,568.9 777.5,597.8 782.2,599.4 782.2,655.9 772.5,655.9 772.5,640.9 758.8,640.9 757.2,608.8 744.7,608.8" fill="#6c6c56" stroke="#000" stroke-width="1" />
<polygon points="794.7,568.1 806.4,562.7 808.4,563.1 809.1,597.8 825.9,605.6 825.9,611.9 816.6,610.3 816.6,640.9 804.8,640.9 804.8,655.9 794.7,655.9" fill="#a6a67e" stroke="#000" stroke-width="1" />
<polygon points="794.7,507.5 805.6,508.8 816.6,513.4 825.9,518.1 825.9,552.5 818.1,550.2 815.0,550.2 806.4,548.6 806.4,563.4 800.9,569.7 799.4,577.5 794.7,577.5" fill="#fde5b2" stroke="#000" stroke-width="1" />
<polygon points="808.0,522.8 817.3,516.6 817.3,533.8 808.8,536.9" fill="#b89972" stroke="#000" stroke-width="1" />
<polygon points="806.4,548.6 815.0,550.2 818.1,555.6 815.0,559.5 808.0,563.4 806.4,563.4" fill="#b89972" stroke="#000" stroke-width="1" />
<polyline points="794.7,535.3 808.8,536.9 825.9,543.9" fill="none" stroke="#000" stroke-width="0.8" />
<polyline points="794.7,548.6 806.4,548.6" fill="none" stroke="#000" stroke-width="0.8" />
<polygon points="731.4,523.6 741.6,518.1 755.6,513.4 763.4,511.1 775.2,508.0 783.8,507.2 783.8,536.9 782.2,535.3 743.1,543.9 743.1,552.5 731.4,547.8" fill="#fde5b2" stroke="#000" stroke-width="1" />
<polyline points="731.4,540.0 743.1,543.9" fill="none" stroke="#000" stroke-width="0.8" />
<polygon points="758.8,518.1 763.4,511.9 775.2,508.8 777.5,518.1 777.5,532.2 766.6,534.5 759.5,531.4" fill="#fde5b2" stroke="#000" stroke-width="1" />
<polyline points="763.4,511.9 768.1,519.7 758.8,518.9" fill="none" stroke="#000" stroke-width="0.7" />
<polyline points="768.1,519.7 767.3,534.2" fill="none" stroke="#000" stroke-width="0.7" />
<polygon points="743.1,543.9 782.2,535.3 783.8,536.9 783.8,582.2 766.6,579.1 766.6,558.8 761.1,555.6 767.3,554.1 767.3,547.8 761.1,548.6 758.8,550.2 750.2,550.9 743.1,552.5" fill="#b89972" stroke="#000" stroke-width="1" />
<polygon points="761.1,548.6 767.3,547.8 767.3,554.1 761.9,556.4" fill="#fde5b2" stroke="#000" stroke-width="1" />
<polygon points="775.2,569.7 782.2,567.3 782.2,597.8 777.5,597.8 775.2,583.8" fill="#1e8a2a" stroke="#000" stroke-width="1" />
<polygon points="793.9,568.1 799.4,569.7 800.2,597.8 793.9,597.8" fill="#1e8a2a" stroke="#000" stroke-width="1" />
<polygon points="775.2,597.8 782.2,597.8 782.2,602.5 779.1,602.5 779.1,605.6 775.9,604.8" fill="#e07838" stroke="#000" stroke-width="1" />
<polygon points="793.9,597.8 800.2,597.8 799.4,602.5 797.0,602.5 797.0,605.6 793.9,605.6" fill="#e07838" stroke="#000" stroke-width="1" />
<ellipse cx="789" cy="514.5" rx="13" ry="5.5" fill="#c9a87a" stroke="#000" stroke-width="0.8" />
<path d="M781 514 q3 -2 6 0 M791 514 q3 -2 6 0" fill="none" stroke="#d8c020" stroke-width="1.6" />
<polygon points="775.2,516.6 781.4,516.6 781.4,533.8 778.3,535.3 775.2,525.9" fill="#a0a0a0" stroke="#333" stroke-width="0.6" />
<polygon points="794.7,516.6 799.4,516.6 797.8,529.1 794.7,534.5" fill="#b0b0b0" stroke="#333" stroke-width="0.6" />
<polygon points="711.1,596.2 719.7,597.8 723.6,591.6 736.9,590.0 743.9,589.2 728.3,597.8 728.3,633.8 721.2,630.6 713.4,622.8" fill="#3ccad2" stroke="#000" stroke-width="1" />
<polygon points="719.7,597.8 723.6,591.6 736.9,590.0 752.5,586.9 743.9,590.0 728.3,597.8" fill="#44d4dc" stroke="#000" stroke-width="1" />
<polygon points="752.5,565.0 765.8,562.7 765.8,597.8 744.7,604.1 743.9,608.8 743.9,633.8 735.3,637.7 728.3,633.8 728.3,597.8 743.9,590.0 752.5,586.9" fill="#1c7c8a" stroke="#000" stroke-width="1" />
<polygon points="752.5,552.5 757.2,550.2 759.5,552.5 760.3,558.8 765.0,561.9 765.8,563.4 752.5,565.0" fill="#3ccad2" stroke="#000" stroke-width="1" />
<polygon points="697.8,536.9 702.5,530.6 715.0,523.6 729.1,518.1 731.4,523.6 731.4,547.8 743.1,552.5 750.2,550.9 752.5,552.5 752.5,554.1 736.9,551.7 725.9,553.3 723.6,556.4 719.7,560.3 705.6,552.5 697.8,543.1" fill="#56843a" stroke="#000" stroke-width="1" />
<polygon points="697.8,543.1 705.6,552.5 719.7,560.3 719.7,597.0 705.6,590.0 698.6,582.2" fill="#507e32" stroke="#000" stroke-width="1" />
<polygon points="719.7,560.3 723.6,556.4 723.6,591.6 719.7,597.0" fill="#3e6024" stroke="#000" stroke-width="1" />
<polygon points="723.6,556.4 725.9,553.3 736.9,551.7 743.9,554.1 743.9,588.1 736.9,590.0 723.6,591.6" fill="url(#ggrn)" stroke="#000" stroke-width="1" />
<polygon points="743.9,554.1 750.9,552.5 752.5,554.1 752.5,586.9 743.9,589.2" fill="#3a5a22" stroke="#000" stroke-width="1" />
<rect x="757" y="623" width="1.6" height="4" fill="#a6a67e" stroke="#000" stroke-width="0.5" />
<rect x="757" y="632" width="1.6" height="4" fill="#a6a67e" stroke="#000" stroke-width="0.5" />
<rect x="814.5" y="622" width="1.8" height="4" fill="#a6a67e" stroke="#000" stroke-width="0.5" />
<rect x="814.5" y="632" width="1.8" height="4" fill="#a6a67e" stroke="#000" stroke-width="0.5" />
<polygon points="762.5,432.5 769.5,432.5 769.5,459.8 762.5,457.5" fill="#bcbcbc" stroke="#000" stroke-width="1" />
<polygon points="769.5,429.4 787.5,429.4 787.5,463.8 769.5,459.8" fill="#6e6e6e" stroke="#000" stroke-width="1" />
<polygon points="787.5,426.2 803.9,426.2 803.9,463.8 787.5,463.8" fill="#b6b6b6" stroke="#000" stroke-width="1" />
<polygon points="803.9,421.6 812.5,421.6 812.5,457.5 803.9,461.4" fill="#707070" stroke="#000" stroke-width="1" />
<polygon points="748.6,455.4 753.1,449.0 762.0,446.5 763.2,457.3 770.8,461.1 767.0,461.7 758.8,463.2 751.8,461.7" fill="#c8c8c8" stroke="#000" stroke-width="1" />
<polygon points="748.2,456.6 751.8,461.7 758.8,463.2 758.8,478.9 753.1,477.2 748.2,472.5" fill="#a2a2a2" stroke="#000" stroke-width="1" />
<polygon points="758.8,463.2 767.0,461.7 767.0,480.8 758.8,484.6" fill="#6a6a6a" stroke="#000" stroke-width="1" />
<polygon points="767.0,461.7 770.8,461.1 770.8,480.1 767.0,480.8" fill="#8e8e8e" stroke="#000" stroke-width="1" />
<polyline points="748.2,472.5 753.1,477.2 758.8,478.9" fill="none" stroke="#8040c0" stroke-width="2" />
<polyline points="767.0,475.7 772.1,472.5 774.6,472.5" fill="none" stroke="#8040c0" stroke-width="2" />
<polygon points="803.8,459.8 812.7,457.3 812.7,446.5 820.3,449.0 824.8,454.1 824.8,461.7 816.5,464.3 811.4,463.2" fill="#c8c8c8" stroke="#000" stroke-width="1" />
<polygon points="811.4,463.2 816.5,464.3 824.8,461.7 824.8,473.1 816.5,478.5 811.4,478.0" fill="#8c8c8c" stroke="#000" stroke-width="1" />
<polygon points="803.8,460.5 811.4,463.2 811.4,485.8 803.8,482.7" fill="#6a6a6a" stroke="#000" stroke-width="1" />
<polygon points="811.4,478.0 816.5,478.5 816.5,483.3 812.7,485.8 811.4,485.8" fill="#9a9a9a" stroke="#000" stroke-width="1" />
<polyline points="811.4,478.2 816.5,478.9 824.8,473.8" fill="none" stroke="#8040c0" stroke-width="2" />
<polyline points="797.5,472.5 802.6,473.8 804.5,475.7" fill="none" stroke="#8040c0" stroke-width="2" />
<polygon points="772.7,467.7 784.4,463.0 792.2,463.8 802.3,468.4 802.3,499.7 795.3,502.8 792.2,502.8 784.4,502.8 778.1,502.8 772.7,498.1" fill="#ecc81e" stroke="#000" stroke-width="1" />
<polygon points="784.4,463.0 792.2,463.8 792.2,467.7 784.4,466.9" fill="#f4d840" stroke="#000" stroke-width="1" />
<polygon points="795.3,488.8 802.3,485.6 802.3,499.7 795.3,502.8" fill="#b89200" stroke="#000" stroke-width="1" />
<polygon points="772.7,479.4 777.3,479.4 777.3,498.1 772.7,498.1" fill="#c9a510" stroke="#000" stroke-width="1" />
<polygon points="775.0,502.8 782.8,502.8 782.8,508.3 775.0,507.5" fill="#9a9a9a" stroke="#000" stroke-width="1" />
<polygon points="792.2,502.8 800.0,502.8 800.0,507.5 792.2,508.3" fill="#9a9a9a" stroke="#000" stroke-width="1" />
<polygon points="825.0,430.0 816.0,415.0 816.0,408.0 847.0,404.0 847.0,596.0 841.5,598.0 826.0,596.0" fill="#b4b4b4" stroke="#000" stroke-width="1" />
<polygon points="841.5,420.0 847.0,416.0 847.0,596.0 841.5,598.0" fill="#6c6c6c" stroke="#000" stroke-width="1" />
<polygon points="845.3,421.6 850.0,420.0 851.6,423.1 850.0,429.4 854.7,430.2 856.2,434.1 854.7,439.5 850.8,441.1 850.0,437.2 845.3,435.6" fill="#18b4d0" stroke="#000" stroke-width="1" />
<polygon points="784.5,466.0 789.0,466.0 789.5,679.0 785.0,679.0" fill="#2b8a4c" stroke="#000" stroke-width="1" />
<polygon points="789.0,466.0 793.5,466.0 794.0,679.0 789.5,679.0" fill="#4cbc7c" stroke="#000" stroke-width="1" />
<polyline points="789.0,466.0 789.5,679.0" fill="none" stroke="#0a4020" stroke-width="0.8" />
<polygon points="722.0,215.0 862.0,156.0 864.0,169.0 864.0,188.0 873.5,185.0 873.5,246.0 851.5,267.0 851.5,401.0 846.0,406.0 815.0,406.0 815.0,350.0 722.0,380.0" fill="#066e7e" stroke="#000" stroke-width="1" />
<polyline points="833.5,200.0 833.5,343.0" fill="none" stroke="#000" stroke-width="1" />
<polygon points="833.5,343.5 847.0,333.0 847.0,271.0 851.5,267.0 851.5,350.0 815.0,350.0" fill="#066e7e" stroke="#000" stroke-width="1" />
<polyline points="847.0,271.0 847.0,333.0 834.0,343.7 815.0,350.0" fill="none" stroke="#000" stroke-width="1" />
<polygon points="815.0,350.0 834.0,344.0 851.5,330.0 852.0,401.0 846.0,405.5 815.0,408.0" fill="url(#gcyl)" stroke="#000" stroke-width="1" />
<polygon points="722.0,250.0 833.5,214.0 833.5,343.5 815.0,350.0 815.0,408.0 722.0,440.0" fill="#066e7e" stroke="#000" stroke-width="1" />
<polygon points="723.0,252.0 726.0,247.5 780.0,230.0 780.0,235.0" fill="#0fcbe7" stroke="#000" stroke-width="1" />
<polygon points="780.0,236.0 784.0,230.0 820.0,219.0 820.5,224.5" fill="#0fcbe7" stroke="#000" stroke-width="1" />
<polygon points="722.0,222.0 757.0,211.0 757.0,240.0 726.0,247.5 722.0,250.0" fill="#066e7e" stroke="#000" stroke-width="1" />
<polygon points="768.0,208.0 808.0,196.0 808.0,222.0 784.0,230.0 780.0,230.0 779.0,221.0 768.0,224.0" fill="#066e7e" stroke="#000" stroke-width="1" />
<polygon points="755.0,221.0 769.0,219.0 769.0,240.5 755.0,241.0" fill="#0aa8c4" stroke="#000" stroke-width="1" />
<polygon points="807.8,206.4 820.8,205.7 820.8,225.5 807.8,224.8" fill="#0aa8c4" stroke="#000" stroke-width="1" />
<polygon points="844.0,187.2 850.9,186.5 850.9,205.7 844.7,206.3" fill="#0aa8c4" stroke="#000" stroke-width="1" />
<polygon points="833.5,220.7 850.9,205.7 856.3,200.2 856.3,194.7 863.9,186.5 864.6,169.4 873.4,185.1 873.4,246.7 851.5,267.0 851.5,343.0 833.5,343.5" fill="#066e7e" stroke="#000" stroke-width="1" />
<polygon points="833.8,216.6 844.7,207.0 850.9,205.7 833.8,222.0" fill="#20e4fa" stroke="#000" stroke-width="1" />
<polygon points="856.3,194.7 863.9,186.5 866.6,187.9 856.3,200.2" fill="#20e4fa" stroke="#000" stroke-width="1" />
<polygon points="863.9,169.4 873.4,185.1 866.6,187.9 863.9,186.5" fill="#0a90a8" stroke="#000" stroke-width="1" />
<polygon points="823.0,191.0 837.9,172.8 846.0,166.0 861.0,160.0 861.0,168.0 851.5,178.3 847.5,181.0 839.2,185.8 823.5,200.2" fill="#077e94" stroke="#000" stroke-width="1" />
<polygon points="823.5,200.2 827.0,202.2 832.4,201.6 852.9,182.4 854.3,179.7 863.9,169.4 861.0,168.0 851.5,178.3 847.5,181.0 839.2,185.8" fill="#20e4fa" stroke="#000" stroke-width="1" />
<polygon points="700.0,213.0 717.0,210.5 753.0,198.5 790.0,187.9 806.4,183.5 821.5,181.0 829.7,166.0 848.8,153.7 858.4,150.3 862.0,155.5 862.0,158.0 858.0,156.5 849.0,159.5 831.0,172.5 822.0,186.5 806.4,189.0 790.0,193.5 753.0,204.0 717.0,216.0 700.0,219.0" fill="#12c6e2" />
<polygon points="700.0,219.0 717.0,216.0 753.0,204.0 790.0,193.5 806.4,189.0 822.0,186.5 831.0,172.5 849.0,159.5 858.0,156.5 862.0,158.0 862.0,160.0 858.0,161.0 846.0,166.0 837.9,172.8 823.0,191.0 806.4,194.5 790.0,198.8 753.0,210.0 717.0,222.0 702.0,225.0" fill="#0aa4be" />
<polyline points="700.0,213.0 717.0,210.5 753.0,198.5 790.0,187.9 806.4,183.5 821.5,181.0 829.7,166.0 848.8,153.7 858.4,150.3 862.0,155.5" fill="none" stroke="#000" stroke-width="1" />
<polyline points="702.0,225.0 717.0,222.0 753.0,210.0 790.0,198.8 806.4,194.5 823.0,191.0 837.9,172.8 846.0,166.0 858.0,161.0 862.0,160.0" fill="none" stroke="#000" stroke-width="1" />
<polyline points="700.0,219.0 717.0,216.0 753.0,204.0 790.0,193.5 806.4,189.0 822.0,186.5 831.0,172.5 849.0,159.5 858.0,156.5 862.0,158.0" fill="none" stroke="#0a6a7c" stroke-width="0.6" />
<polygon points="694.0,226.0 704.0,224.0 722.0,218.0 722.0,441.0 716.0,438.0 701.0,442.0 701.0,408.0 694.0,407.0" fill="#06a5be" stroke="#000" stroke-width="1" />
<polyline points="722.0,218.0 722.0,408.0" fill="none" stroke="#000" stroke-width="1" />
<polygon points="688.0,211.0 700.0,213.0 706.0,228.0 694.0,228.0" fill="#06a5be" />
<polygon points="692.0,232.0 704.0,236.5 725.0,232.0 725.0,238.0 722.0,250.0 694.0,255.0" fill="#06a5be" stroke="#000" stroke-width="1" />
<polygon points="572.0,181.0 578.0,178.0 586.0,177.0 586.0,166.0 700.0,213.0 694.0,226.0 694.0,407.0 701.0,408.0 701.0,442.0 647.5,420.0 647.0,417.0 638.0,418.0 586.0,394.0 580.5,386.0 581.0,363.0 574.0,361.0 572.0,342.0" fill="#0cc4e0" stroke="#000" stroke-width="1" />
<polygon points="572.5,180.0 582.5,177.5 582.5,191.2 588.1,193.8 588.1,207.5 572.5,206.9" fill="#0cb6d2" stroke="#000" stroke-width="1" />
<ellipse cx="580" cy="183" rx="2.2" ry="1.2" fill="#067a8c" stroke="#000" stroke-width="0.6" />
<polygon points="582.5,176.9 611.9,187.5 611.9,202.5 582.5,191.2" fill="#0cc4e0" stroke="#000" stroke-width="1" />
<polygon points="582.5,176.9 583.8,172.5 591.2,173.8 620.0,185.6 611.9,187.5" fill="#20e4fa" stroke="#000" stroke-width="1" />
<polygon points="611.9,187.5 620.0,185.6 620.0,200.0 611.9,202.5" fill="#0a9cb6" stroke="#000" stroke-width="1" />
<polygon points="620.0,179.4 636.9,186.9 636.9,193.1 620.0,185.6" fill="#20e4fa" stroke="#000" stroke-width="1" />
<polygon points="620.0,185.6 636.9,193.1 636.9,205.0 630.0,205.6 628.8,208.1 627.5,208.1 627.5,203.8 620.0,200.0" fill="#0cc4e0" stroke="#000" stroke-width="1" />
<polygon points="636.9,193.1 645.0,198.8 645.0,232.5 636.9,231.2" fill="#0ab2ce" stroke="#000" stroke-width="1" />
<polygon points="636.9,186.9 645.0,185.6 654.4,188.8 653.8,191.9 647.5,193.8 645.0,198.8 636.9,193.1" fill="#20e4fa" stroke="#000" stroke-width="1" />
<polygon points="646.9,199.4 655.0,192.5 671.2,198.1 661.2,201.2 653.1,205.6 652.5,208.8 646.9,205.0" fill="#20e4fa" stroke="#000" stroke-width="1" />
<polygon points="652.5,205.0 655.0,202.5 681.9,212.5 681.9,218.1 652.5,208.8" fill="#20e4fa" stroke="#000" stroke-width="1" />
<polygon points="681.9,212.5 690.6,208.8 691.2,250.0 681.9,247.5" fill="#0a9cb6" stroke="#000" stroke-width="1" />
<polygon points="681.9,212.5 682.5,208.1 690.0,206.2 690.6,208.8" fill="#20e4fa" stroke="#000" stroke-width="1" />
<polygon points="664.0,194.0 686.0,210.0 690.0,214.0 672.0,212.0" fill="#20e4fa" />
<polyline points="572.5,206.9 627.5,228.8 627.5,208.1" fill="none" stroke="#000" stroke-width="1" />
<polyline points="636.9,231.2 641.2,233.1" fill="none" stroke="#000" stroke-width="1" />
<polygon points="682.0,209.0 690.0,212.0 690.0,250.0 682.0,247.0" fill="#06a5be" stroke="#000" stroke-width="1" />
<polyline points="690.0,212.0 694.0,226.0" fill="none" stroke="#000" stroke-width="1" />
<polyline points="572.0,342.0 590.0,349.0 590.0,362.0 581.0,363.0" fill="none" stroke="#000" stroke-width="1" />
<polygon points="573.0,343.0 590.0,349.5 590.0,362.0 575.0,361.0" fill="#06a5be" stroke="#000" stroke-width="1" />
<polyline points="590.0,349.0 629.0,364.0 629.0,384.0 638.0,388.0 638.0,368.0 651.0,373.0 651.0,386.0 647.0,386.0" fill="none" stroke="#000" stroke-width="1" />
<polygon points="638.0,368.0 651.0,373.0 651.0,386.0 638.0,388.0" fill="#06a5be" stroke="#000" stroke-width="1" />
<polyline points="651.0,374.0 692.0,389.0 694.0,388.0" fill="none" stroke="#000" stroke-width="1" />
<polygon points="638.0,388.0 647.0,386.0 647.0,417.0 638.0,418.0" fill="#0ab4d0" stroke="#000" stroke-width="1" />
<polyline points="638.0,388.0 638.0,418.0" fill="none" stroke="#000" stroke-width="1" />
<polyline points="647.0,386.0 647.0,417.0" fill="none" stroke="#000" stroke-width="1" />
<polyline points="692.0,389.0 692.0,407.0" fill="none" stroke="#000" stroke-width="1" />
<polygon points="580.5,386.0 586.0,394.0 638.0,418.0 638.0,414.0 588.0,391.0 584.0,385.0" fill="#06a5be" stroke="#000" stroke-width="1" />
<polygon points="647.5,420.0 701.0,442.0 701.0,438.0 648.0,416.0" fill="#06a5be" stroke="#000" stroke-width="1" />
<polygon points="701.0,408.0 722.0,408.0 722.0,440.0 716.0,438.0 701.0,442.0" fill="#0ab6d2" stroke="#000" stroke-width="1" />
<polygon points="703.0,409.0 715.0,409.0 715.0,437.0 703.0,440.0" fill="url(#gcyl)" stroke="#000" stroke-width="1" />
<polygon points="722.0,380.0 815.0,350.0 815.0,416.0 787.5,421.6 723.4,442.0" fill="#066e7e" />
<polyline points="815.0,416.0 787.5,421.6 723.4,442.0" fill="none" stroke="#000" stroke-width="1" />
<polygon points="723.4,442.0 787.5,421.6 809.4,416.9 814.0,421.6 787.5,432.5 731.0,446.0 724.0,445.0" fill="#0a8ca2" stroke="#000" stroke-width="1" />
<polygon points="599.8,250.8 664.0,275.0 665.5,316.5 599.0,290.6" fill="#e2e2e2" stroke="#000" stroke-width="1" />
<polyline points="664.0,275.0 665.8,316.0" fill="none" stroke="#555" stroke-width="1.5" />
<ellipse cx="603.5" cy="273" rx="1.4" ry="1.6" fill="#f4f4f4" stroke="#000" stroke-width="0.7" />
<ellipse cx="659" cy="294" rx="1.4" ry="1.6" fill="#f4f4f4" stroke="#000" stroke-width="0.7" />
<g transform="translate(611.5,268.5) rotate(22)"><text x="0" y="0" font-family="Liberation Sans,sans-serif" font-size="7" font-weight="bold" fill="#000" stroke="#000" stroke-width="0.3" textLength="42" lengthAdjust="spacingAndGlyphs">Электропривод 380в</text><text x="13" y="11" font-family="Liberation Sans,sans-serif" font-size="9" font-weight="bold" fill="#000" stroke="#000" stroke-width="0.4" textLength="22" lengthAdjust="spacingAndGlyphs">ЕЭИАЛ5</text></g>
<linearGradient id="gplug" x1="0.2" x2="0.8" y1="0" y2="1"><stop offset="0" stop-color="#dcdcdc"/><stop offset=".5" stop-color="#bababa"/><stop offset="1" stop-color="#6e6e6e"/></linearGradient>
<path d="M647 213.5 L660 210.5 Q669 213 669 222 Q669 231 663 235 L651 238.5 Z" fill="url(#gplug)" stroke="#000" stroke-width="1" />
<ellipse cx="648" cy="225.5" rx="7.2" ry="12.4" fill="#ebebeb" stroke="#000" stroke-width="1" transform="rotate(-6 648 225.5)" />
<ellipse cx="648.5" cy="225.5" rx="5.6" ry="10.8" fill="#e2e2e2" stroke="#777" stroke-width="0.6" transform="rotate(-6 648.5 225.5)" />
<path d="M680 289 Q686 287 699 292 L699 322 L692 320 Q682 316 680 306Z" fill="#06a5be" stroke="#000" stroke-width="1" />
<ellipse cx="687" cy="304" rx="9.5" ry="14" fill="#0cc4e0" stroke="#000" stroke-width="1" transform="rotate(-10 687 304)" />
<polygon points="680.0,299.0 685.0,294.0 693.0,295.0 698.0,301.0 697.0,311.0 691.0,316.0 682.0,313.0" fill="#e8e8e8" stroke="#000" stroke-width="1" />
<polygon points="693.0,295.0 698.0,301.0 697.0,311.0 691.0,316.0 690.0,305.0" fill="#a0a0a0" stroke="#000" stroke-width="1" />
<polyline points="693.0,295.0 690.0,305.0 691.0,316.0" fill="none" stroke="#555" stroke-width="0.7" />
<polyline points="684.5,327.0 684.5,335.0" fill="none" stroke="#000" stroke-width="1.6" />
<polyline points="680.0,335.5 689.0,336.5" fill="none" stroke="#000" stroke-width="1.4" />
<polyline points="681.5,339.0 687.5,339.7" fill="none" stroke="#000" stroke-width="1.2" />
<polyline points="683.0,342.0 686.0,342.3" fill="none" stroke="#000" stroke-width="1.2" />
<polygon points="586.0,166.0 587.5,163.0 594.0,160.0 638.0,150.0 641.0,147.0 647.0,145.0 696.0,133.5 728.0,129.5 755.0,129.0 759.0,126.5 794.0,125.0 815.0,136.0 819.0,136.5 822.0,139.0 856.0,149.0 861.0,153.0 862.0,155.5 858.4,150.8 848.8,153.7 829.7,166.0 821.5,181.0 806.4,183.5 790.0,187.9 753.0,198.5 717.0,210.5 700.0,213.0 682.0,209.0 672.0,198.5 655.0,191.0 653.0,189.0 646.0,186.0 637.0,188.0 636.0,187.0 621.0,180.0 598.0,171.0" fill="#0fcbe7" stroke="#000" stroke-width="1" />
<polygon points="707.5,215.5 715.5,214.5 716.0,232.5 708.0,233.5" fill="url(#gcyl)" stroke="#000" stroke-width="1" />
<ellipse cx="712.5" cy="233.0" rx="5.5" ry="2.2" fill="#0ab0cc" stroke="#000" stroke-width="0.8" transform="rotate(-12 712.5 233.0)" />
<ellipse cx="711" cy="213.5" rx="7" ry="3.6" fill="#16d2ec" stroke="#000" stroke-width="1" transform="rotate(-14 711 213.5)" />
<polygon points="760.5,197.0 768.5,196.0 769.0,214.0 761.0,215.0" fill="url(#gcyl)" stroke="#000" stroke-width="1" />
<ellipse cx="765.5" cy="214.5" rx="5.5" ry="2.2" fill="#0ab0cc" stroke="#000" stroke-width="0.8" transform="rotate(-12 765.5 214.5)" />
<ellipse cx="764" cy="195" rx="7.5" ry="3.6" fill="#16d2ec" stroke="#000" stroke-width="1" transform="rotate(-14 764 195)" />
<polygon points="810.5,184.0 818.5,183.0 819.0,201.0 811.0,202.0" fill="url(#gcyl)" stroke="#000" stroke-width="1" />
<ellipse cx="815.5" cy="201.5" rx="5.5" ry="2.2" fill="#0ab0cc" stroke="#000" stroke-width="0.8" transform="rotate(-12 815.5 201.5)" />
<ellipse cx="814" cy="182" rx="7.5" ry="3.6" fill="#16d2ec" stroke="#000" stroke-width="1" transform="rotate(-14 814 182)" />
<polygon points="834.5,164.5 842.5,163.5 843.0,181.5 835.0,182.5" fill="url(#gcyl)" stroke="#000" stroke-width="1" />
<ellipse cx="839.5" cy="182.0" rx="5.5" ry="2.2" fill="#0ab0cc" stroke="#000" stroke-width="0.8" transform="rotate(-12 839.5 182.0)" />
<ellipse cx="838" cy="162.5" rx="7.5" ry="3.6" fill="#16d2ec" stroke="#000" stroke-width="1" transform="rotate(-14 838 162.5)" />
<path d="M641 147 Q637 149 640 151.5 Q645 151 647 148" fill="#06a5be" stroke="#000" stroke-width="0.8" />
<path d="M815 136 Q813 139 817 140.5 Q821 140 822 139" fill="#06a5be" stroke="#000" stroke-width="0.8" />
<path d="M587.5 163 Q584 166 588 169 L597 166" fill="#06a5be" stroke="#000" stroke-width="0.8" />
<ellipse cx="738" cy="149" rx="14" ry="7" fill="#06a5be" stroke="#000" stroke-width="1" />
<path d="M724 142 L724 149 A14 7 0 0 0 752 149 L752 142Z" fill="#06a5be" stroke="#000" stroke-width="1" />
<ellipse cx="738" cy="142" rx="14" ry="6.5" fill="#0fcbe7" stroke="#000" stroke-width="1" />
<path d="M727 139 L727 143 A11.5 5 0 0 0 750 143 L750 139Z" fill="#d8d8d8" stroke="#000" stroke-width="1" />
<ellipse cx="738.5" cy="139" rx="11.5" ry="5" fill="#e6e6e6" stroke="#000" stroke-width="1" />
<path d="M729 124 L729 139 A10 4 0 0 0 749.5 139 L749.5 124Z" fill="#c8c8c8" stroke="#000" stroke-width="1" />
<polygon points="729.0,124.0 732.0,127.0 732.0,141.5 729.0,139.0" fill="#f0f0f0" />
<polygon points="743.0,127.5 749.5,124.0 749.5,139.0 743.0,142.5" fill="#8c8c8c" />
<polyline points="732.0,127.0 732.0,141.5" fill="none" stroke="#555" stroke-width="0.7" />
<polyline points="743.0,127.5 743.0,142.5" fill="none" stroke="#555" stroke-width="0.7" />
<ellipse cx="739.2" cy="124" rx="10.3" ry="4" fill="#f4f4f4" stroke="#000" stroke-width="1" />
<polygon points="773.5,379.9 790.5,362.7 807.0,369.8 790.5,387.0 790.5,409.5 773.5,401.8" fill="#858585" stroke="#000" stroke-width="1" />
<polygon points="773.5,379.9 790.5,362.7 799.2,366.7 782.8,384.6" fill="#f2f2f2" stroke="#000" stroke-width="1" />
<polygon points="773.5,379.9 782.8,384.6 782.8,408.1 773.5,401.8" fill="#f2f2f2" stroke="#000" stroke-width="1" />
<polygon points="790.5,387.0 807.0,369.8 815.5,373.7 800.0,390.1" fill="#f2f2f2" stroke="#000" stroke-width="1" />
<polygon points="790.5,387.0 800.0,390.1 800.0,413.5 790.5,408.5" fill="#f2f2f2" stroke="#000" stroke-width="1" />
<polygon points="814.5,373.5 835.5,382.5 835.5,403.5 818.5,420.5 800.0,413.5 800.0,390.1" fill="#858585" stroke="#000" stroke-width="1" />
<ellipse cx="817.9" cy="397.1" rx="9" ry="12.2" fill="#fafafa" stroke="#000" stroke-width="1" transform="rotate(14 817.9 397.1)" />
<path d="M815.9 385.6 Q808.9 395.1 811.9 405.1 Q819.9 399.1 815.9 385.6Z" fill="#d8d8d8" stroke="#000" stroke-width="0.6" />
<polygon points="729.0,393.4 746.0,376.2 762.5,383.3 746.0,400.5 746.0,423.0 729.0,415.3" fill="#858585" stroke="#000" stroke-width="1" />
<polygon points="729.0,393.4 746.0,376.2 754.7,380.2 738.3,398.1" fill="#f2f2f2" stroke="#000" stroke-width="1" />
<polygon points="729.0,393.4 738.3,398.1 738.3,421.6 729.0,415.3" fill="#f2f2f2" stroke="#000" stroke-width="1" />
<polygon points="746.0,400.5 762.5,383.3 771.0,387.2 755.5,403.6" fill="#f2f2f2" stroke="#000" stroke-width="1" />
<polygon points="746.0,400.5 755.5,403.6 755.5,427.0 746.0,422.0" fill="#f2f2f2" stroke="#000" stroke-width="1" />
<polygon points="770.0,387.0 791.0,396.0 791.0,417.0 774.0,434.0 755.5,427.0 755.5,403.6" fill="#858585" stroke="#000" stroke-width="1" />
<ellipse cx="773.4" cy="410.6" rx="9" ry="12.2" fill="#fafafa" stroke="#000" stroke-width="1" transform="rotate(14 773.4 410.6)" />
<path d="M771.4 399.1 Q764.4 408.6 767.4 418.6 Q775.4 412.6 771.4 399.1Z" fill="#d8d8d8" stroke="#000" stroke-width="0.6" /></svg></body></html>
